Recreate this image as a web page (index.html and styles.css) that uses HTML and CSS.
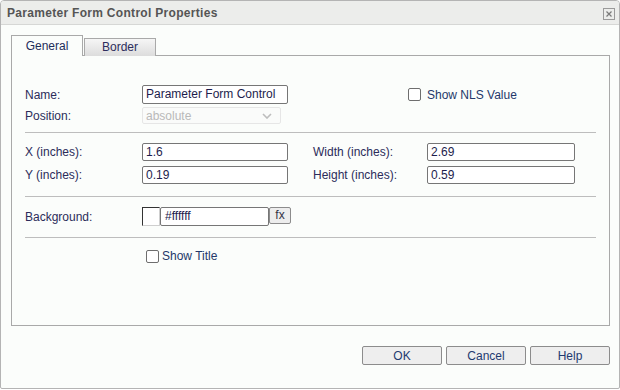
FILE: index.html
```html
<!DOCTYPE html>
<html>
<head>
<meta charset="utf-8">
<link rel="stylesheet" href="styles.css">
</head>
<body>
<div class="dialog">
  <div class="titlebar">
    <span class="title">Parameter Form Control Properties</span>
    <span class="close">
      <svg width="12" height="12" viewBox="0 0 12 12"><rect x="0.5" y="0.5" width="11" height="11" fill="none" stroke="#9a9a9a"/><path d="M3.5 3.5 L8.5 8.5 M8.5 3.5 L3.5 8.5" stroke="#7a7a7a" stroke-width="1.2"/></svg>
    </span>
  </div>
  <div class="body">
    <div class="tabs">
      <div class="tab active">General</div>
      <div class="tab">Border</div>
    </div>
    <div class="panel">
      <div class="row row-name">
        <label class="lbl">Name:</label>
        <div class="input w146">Parameter Form Control</div>
        <div class="check nls"><span class="box"></span><span class="ctext">Show NLS Value</span></div>
      </div>
      <div class="row row-pos">
        <label class="lbl">Position:</label>
        <div class="select">
          <span>absolute</span>
          <svg width="10" height="6" viewBox="0 0 10 6"><path d="M1 1 L5 5 L9 1" fill="none" stroke="#bdbdbd" stroke-width="1.6"/></svg>
        </div>
      </div>
      <div class="sep sep1"></div>
      <div class="row row-x">
        <label class="lbl">X (inches):</label>
        <div class="input w146 h18">1.6</div>
        <label class="lbl2">Width (inches):</label>
        <div class="input w148 h18">2.69</div>
      </div>
      <div class="row row-y">
        <label class="lbl">Y (inches):</label>
        <div class="input w146 h18">0.19</div>
        <label class="lbl2">Height (inches):</label>
        <div class="input w148 h18">0.59</div>
      </div>
      <div class="sep sep2"></div>
      <div class="row row-bg">
        <label class="lbl">Background:</label>
        <div class="swatch"></div>
        <div class="input colortext">#ffffff</div>
        <div class="fx">fx</div>
      </div>
      <div class="sep sep3"></div>
      <div class="row row-title">
        <span class="lblspace"></span>
        <div class="check showtitle"><span class="box"></span><span class="ctext">Show Title</span></div>
      </div>
    </div>
    <div class="footer">
      <button class="btn">OK</button>
      <button class="btn">Cancel</button>
      <button class="btn">Help</button>
    </div>
  </div>
</div>
</body>
</html>
```

FILE: styles.css
```css
* { box-sizing: border-box; }
html, body { margin: 0; padding: 0; background: #ffffff; }
body {
  font-family: "Liberation Sans", Arial, sans-serif;
  font-size: 12px;
  color: #2c2c5a;
}
.dialog {
  width: 620px;
  height: 389px;
  border: 1px solid #b4b4b4;
  border-radius: 4px 4px 2px 2px;
  background: #fbfdfb;
  display: flex;
  flex-direction: column;
  overflow: hidden;
}
.titlebar {
  height: 24px;
  flex: none;
  background: #ecedeb;
  border-bottom: 1px solid #d6d7d5;
  display: flex;
  align-items: center;
  justify-content: space-between;
  padding: 0 4px 0 6px;
}
.title {
  font-weight: bold;
  color: #555555;
  font-size: 12px;
  letter-spacing: 0.3px;
}
.close { display: flex; width: 12px; height: 12px; margin-top: 2px; }
.body {
  flex: 1;
  padding: 10px 9px 0 10px;
  display: flex;
  flex-direction: column;
}
.tabs {
  display: flex;
  align-items: flex-end;
  height: 21px;
  gap: 1px;
  position: relative;
  z-index: 1;
  margin-bottom: -1px;
}
.tab {
  height: 18px;
  width: 72px;
  border: 1px solid #a9a9a9;
  border-bottom: none;
  background: linear-gradient(#f6f6f6, #dcdcdc);
  color: #2d2d5d;
  text-align: center;
  line-height: 17px;
}
.tab.active {
  height: 21px;
  background: #fbfdfb;
  color: #1e2d5a;
  line-height: 20px;
}
.panel {
  width: 599px;
  height: 271px;
  border: 1px solid #a9a9a9;
  padding: 29px 13px 0 13px;
  display: flex;
  flex-direction: column;
}
.row { display: flex; align-items: center; }
.lbl { width: 117px; flex: none; }
.lblspace { width: 117px; flex: none; }
.lbl2 { width: 114px; flex: none; margin-left: 25px; }
.input {
  height: 19px;
  border: 1px solid #767676;
  border-radius: 2px;
  background: #ffffff;
  padding: 0 3px;
  line-height: 17px;
  color: #1d1d4d;
  white-space: nowrap;
  overflow: hidden;
}
.w146 { width: 146px; }
.w148 { width: 148px; }
.h18 { height: 18px; line-height: 16px; }
.row-pos { margin-top: 3px; }
.select {
  width: 139px;
  height: 17px;
  border: 1px solid #e6e6e6;
  border-radius: 2px;
  background: #fafbfa;
  color: #b9b9b9;
  display: flex;
  align-items: center;
  justify-content: space-between;
  padding: 0 8px 0 3px;
}
.sep { border-top: 1px solid #bdbdbd; height: 0; }
.sep1 { margin-top: 8px; }
.row-x { margin-top: 10px; }
.row-y { margin-top: 5px; }
.sep2 { margin-top: 12px; }
.row-bg { margin-top: 10px; }
.sep3 { margin-top: 11px; }
.row-title { margin-top: 11px; }
.check { display: flex; align-items: center; color: #24386a; }
.box {
  width: 13px;
  height: 13px;
  border: 1px solid #6e6e6e;
  border-radius: 2px;
  background: #ffffff;
  flex: none;
}
.nls { margin-left: 120px; }
.nls .ctext { margin-left: 6px; }
.showtitle { margin-left: 4px; }
.showtitle .ctext { margin-left: 3px; }
.swatch {
  width: 18px;
  height: 19px;
  border-top: 1px solid #333333;
  border-left: 1px solid #333333;
  border-right: 1px solid #cfcfcf;
  border-bottom: 1px solid #cfcfcf;
  background: #ffffff;
}
.colortext { width: 109px; margin-left: 0; padding-left: 4px; }
.fx {
  width: 22px;
  height: 17px;
  margin-left: 0;
  align-self: flex-start;
  border: 1px solid #8c8c8c;
  border-radius: 2px;
  background: #ededed;
  color: #333344;
  text-align: center;
  line-height: 15px;
}
.footer {
  display: flex;
  justify-content: flex-end;
  gap: 4px;
  margin-top: 20px;
  padding-right: 0;
}
.btn {
  width: 80px;
  height: 19px;
  border: 1px solid #8c8c8c;
  border-radius: 2px;
  background: #eeeeee;
  font-family: "Liberation Sans", Arial, sans-serif;
  font-size: 12px;
  color: #1f3a70;
  padding: 0;
}
```
